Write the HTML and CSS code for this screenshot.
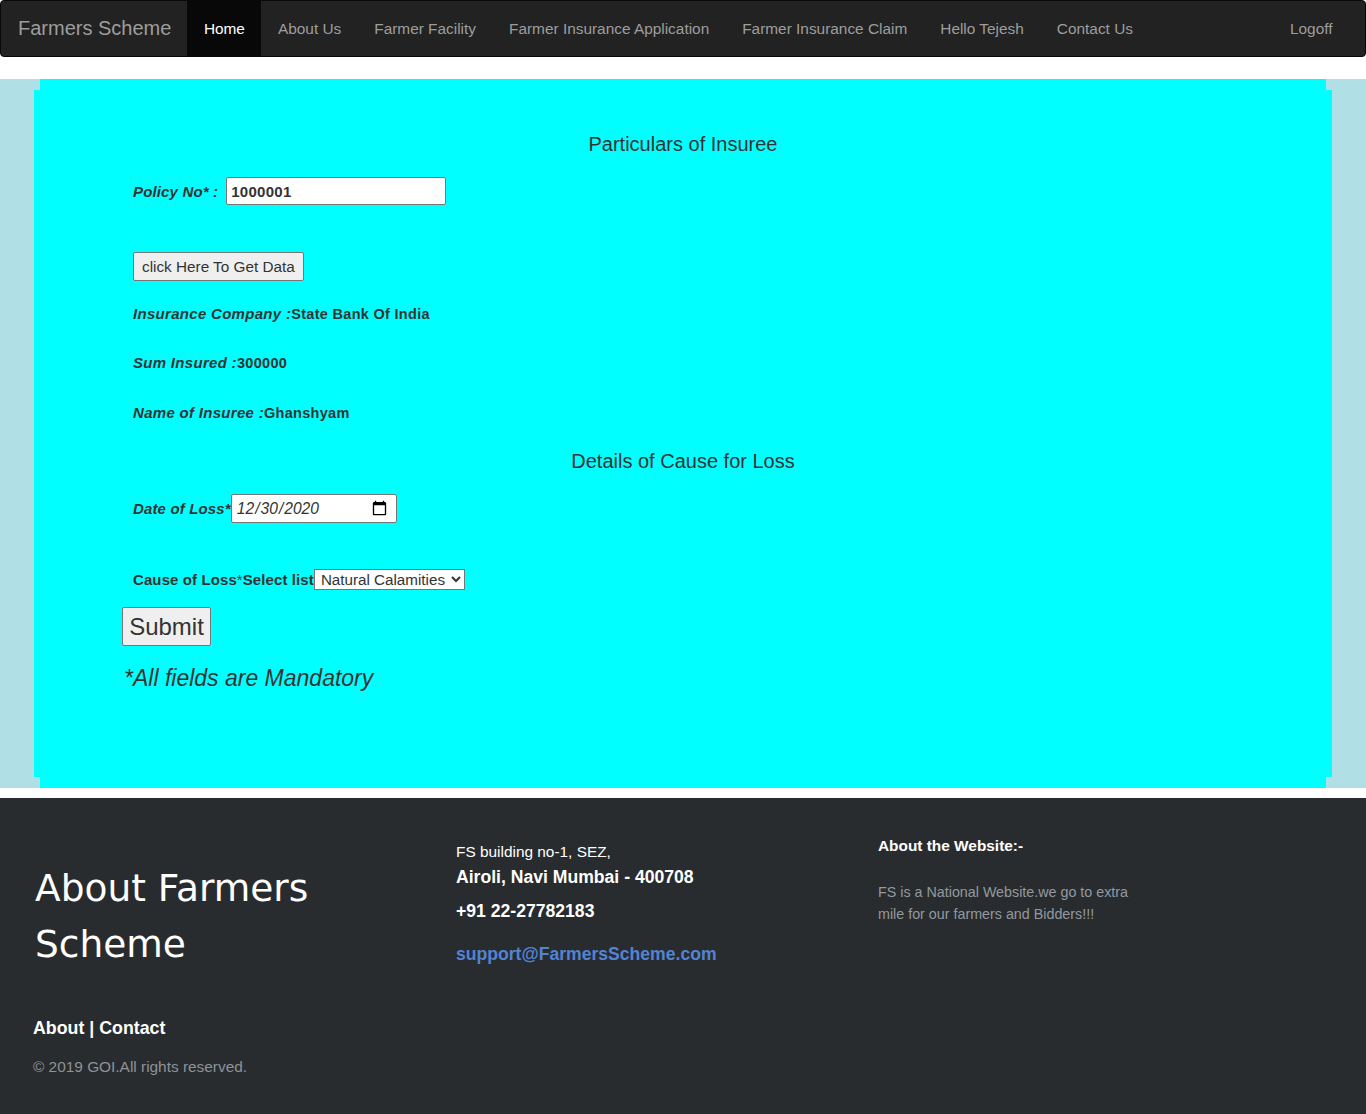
FILE: index.html
```html
<!DOCTYPE html>
<html lang="en">
<head>
<meta charset="utf-8">
<title>Farmer Insurance Claim</title>
<link rel="stylesheet" href="styles.css">
</head>
<body>
<nav class="navbar">
  <a class="brand" href="#">Farmers Scheme</a>
  <ul class="nav">
    <li class="active"><a href="#">Home</a></li>
    <li><a href="#">About Us</a></li>
    <li><a href="#">Farmer Facility</a></li>
    <li><a href="#">Farmer Insurance Application</a></li>
    <li><a href="#">Farmer Insurance Claim</a></li>
    <li><a href="#">Hello Tejesh</a></li>
    <li><a href="#">Contact Us</a></li>
  </ul>
  <ul class="nav nav-right">
    <li><a href="#">Logoff</a></li>
  </ul>
</nav>

<section class="band">
  <div class="panel">
    <form class="panel-inner">
      <h3 class="section-title">Particulars of Insuree</h3>
      <div class="field field-policy">
        <label class="lbl" for="policy">Policy No* :</label>
        <input id="policy" class="txt-input" type="text" value="1000001">
      </div>
      <div class="field field-btn">
        <button type="button" class="btn-get">click Here To Get Data</button>
      </div>
      <p class="info info-first"><span class="lbl">Insurance Company :</span>State Bank Of India</p>
      <p class="info info-sum"><span class="lbl">Sum Insured :</span>300000</p>
      <p class="info info-name"><span class="lbl">Name of Insuree :</span>Ghanshyam</p>
      <h3 class="section-title section-title-2">Details of Cause for Loss</h3>
      <div class="field field-date">
        <label class="lbl" for="dol">Date of Loss*</label>
        <input id="dol" class="date-input" type="date" value="2020-12-30">
      </div>
      <div class="field field-cause">
        <label class="lbl-plain" for="cause">Cause of Loss<span class="star">*</span>Select list</label>
        <select id="cause" class="sel">
          <option>Natural Calamities</option>
        </select>
      </div>
      <button type="button" class="btn-submit">Submit</button>
      <p class="mandatory">*All fields are Mandatory</p>
    </form>
  </div>
</section>

<footer class="footer">
  <div class="f-col f-left">
    <h2 class="f-title">About Farmers Scheme</h2>
    <p class="f-links"><a href="#">About</a> | <a href="#">Contact</a></p>
    <p class="f-copy">© 2019 GOI.All rights reserved.</p>
  </div>
  <div class="f-col f-center">
    <p class="f-addr1">FS building no-1, SEZ,</p>
    <p class="f-addr2">Airoli, Navi Mumbai - 400708</p>
    <p class="f-phone">+91 22-27782183</p>
    <p class="f-mail"><a href="#">support@FarmersScheme.com</a></p>
  </div>
  <div class="f-col f-right">
    <p class="f-about-title">About the Website:-</p>
    <p class="f-about-text">FS is a National Website.we go to extra mile for our farmers and Bidders!!!</p>
  </div>
</footer>
</body>
</html>
```

FILE: styles.css
```css
* { box-sizing: border-box; }

html, body {
  margin: 0;
  padding: 0;
  background: #fff;
  font-family: "Liberation Sans", Arial, Helvetica, sans-serif;
  color: #333;
}

a { text-decoration: none; }

/* Navbar */
.navbar {
  display: flex;
  align-items: stretch;
  height: 57px;
  background: #222;
  border: 1px solid #080808;
  border-radius: 4px;
  margin-bottom: 22px;
}
.brand {
  display: block;
  padding: 0 16px 0 17px;
  line-height: 55px;
  font-size: 20px;
  color: #9d9d9d;
}
.nav {
  display: flex;
  list-style: none;
  margin: 0;
  padding: 0;
}
.nav li a {
  display: block;
  padding: 0 16.5px;
  line-height: 55px;
  font-size: 15.4px;
  color: #9d9d9d;
}
.nav li.active a {
  background: #080808;
  color: #fff;
}
.nav-right {
  margin-left: auto;
  margin-right: 16px;
}

/* Main band */
.band {
  background: #b0e0e6;
  padding: 0 40px;
}
.panel {
  background: #00ffff;
  padding: 11px 0;
}
.panel-inner {
  background: #00ffff;
  margin: 0 -6px;
  padding: 43px 0 86px 88px;
}
.section-title {
  margin: 0;
  margin-left: -88px;
  text-align: center;
  font-size: 20px;
  line-height: 22px;
  font-weight: normal;
  color: #333;
}
.section-title-2 { margin-top: 27px; }

.field {
  display: flex;
  align-items: center;
  margin-left: 11px;
}
.field-policy { margin-top: 22px; height: 28px; }
.field-btn { margin-top: 47px; }
.field-date { margin-top: 22px; }
.field-cause { margin-top: 46px; }

.lbl {
  font-weight: bold;
  font-style: italic;
  font-size: 15px;
  letter-spacing: 0.15px;
  color: #333;
}
.lbl-plain {
  font-weight: bold;
  font-size: 15px;
  letter-spacing: 0.1px;
  color: #333;
}
.star { font-weight: normal; }

.txt-input {
  margin-left: 8px;
  width: 220px;
  height: 28px;
  border: 1px solid #767676;
  border-radius: 2px;
  background: #fff;
  padding: 0 4px;
  font-family: "Liberation Sans", Arial, sans-serif;
  font-size: 15px;
  font-weight: bold;
  letter-spacing: 0.3px;
  color: #333;
}
.btn-get {
  height: 29px;
  padding: 0 8px;
  background: #efefef;
  border: 1px solid #767676;
  border-radius: 2px;
  font-family: "Liberation Sans", Arial, sans-serif;
  font-size: 15.3px;
  color: #333;
}
.info {
  margin: 0 0 0 11px;
  font-size: 14.5px;
  line-height: 20px;
  font-weight: bold;
  letter-spacing: 0.3px;
  color: #333;
}
.info .lbl { font-size: 15px; letter-spacing: 0.3px; }
.info-first { margin-top: 23px; }
.info-sum { margin-top: 29px; }
.info-name { margin-top: 30px; }

.date-input {
  width: 166px;
  height: 29px;
  border: 1px solid #767676;
  border-radius: 2px;
  background: #fff;
  padding: 0 4px;
  font-family: "Liberation Sans", Arial, sans-serif;
  font-size: 15.6px;
  font-style: italic;
  color: #333;
}
.date-input::-webkit-calendar-picker-indicator {
  width: 17px;
  height: 17px;
  margin-right: 2px;
}
.sel {
  height: 21px;
  width: 151px;
  border: 1px solid #767676;
  border-radius: 0;
  background: #fff;
  font-family: "Liberation Sans", Arial, sans-serif;
  font-size: 15.2px;
  color: #333;
  padding: 0 0 0 2px;
}
.btn-submit {
  display: block;
  margin-top: 17px;
  width: 89px;
  height: 39px;
  padding: 0;
  background: #efefef;
  border: 1px solid #767676;
  border-radius: 2px;
  font-family: "Liberation Sans", Arial, sans-serif;
  font-size: 24px;
  color: #333;
}
.mandatory {
  margin: 19px 0 0 2px;
  font-size: 23px;
  line-height: 26px;
  font-style: italic;
  color: #333;
}

/* Footer */
.footer {
  margin-top: 10px;
  background: #292c2f;
  display: grid;
  grid-template-columns: 423px 422px 1fr;
  padding: 0 33px;
  height: 316px;
}
.f-col p { margin: 0; }
.f-title {
  margin: 62px 0 0 2px;
  width: 320px;
  font-family: "DejaVu Sans", "Liberation Sans", sans-serif;
  font-weight: normal;
  font-size: 37.5px;
  line-height: 56px;
  color: #fff;
}
.f-links {
  margin-top: 45px !important;
  font-size: 17.8px;
  line-height: 22px;
  font-weight: bold;
  color: #fff;
}
.f-links a { color: #fff; }
.f-copy {
  margin-top: 18px !important;
  font-size: 15.4px;
  line-height: 20px;
  color: #8f9296;
}
.f-addr1 {
  margin-top: 44px !important;
  font-size: 15.4px;
  line-height: 20px;
  color: #fff;
}
.f-addr2 {
  margin-top: 4px !important;
  font-size: 17.6px;
  line-height: 22px;
  font-weight: bold;
  color: #fff;
}
.f-phone {
  margin-top: 12px !important;
  font-size: 17.6px;
  line-height: 22px;
  font-weight: bold;
  color: #fff;
}
.f-mail {
  margin-top: 21px !important;
  font-size: 17.6px;
  line-height: 22px;
  font-weight: bold;
}
.f-mail a { color: #5383d3; }
.f-about-title {
  margin-top: 38px !important;
  font-size: 15.4px;
  line-height: 20px;
  font-weight: bold;
  color: #fff;
}
.f-about-text {
  margin-top: 25px !important;
  width: 270px;
  font-size: 14.3px;
  line-height: 22px;
  color: #92999f;
}
```
